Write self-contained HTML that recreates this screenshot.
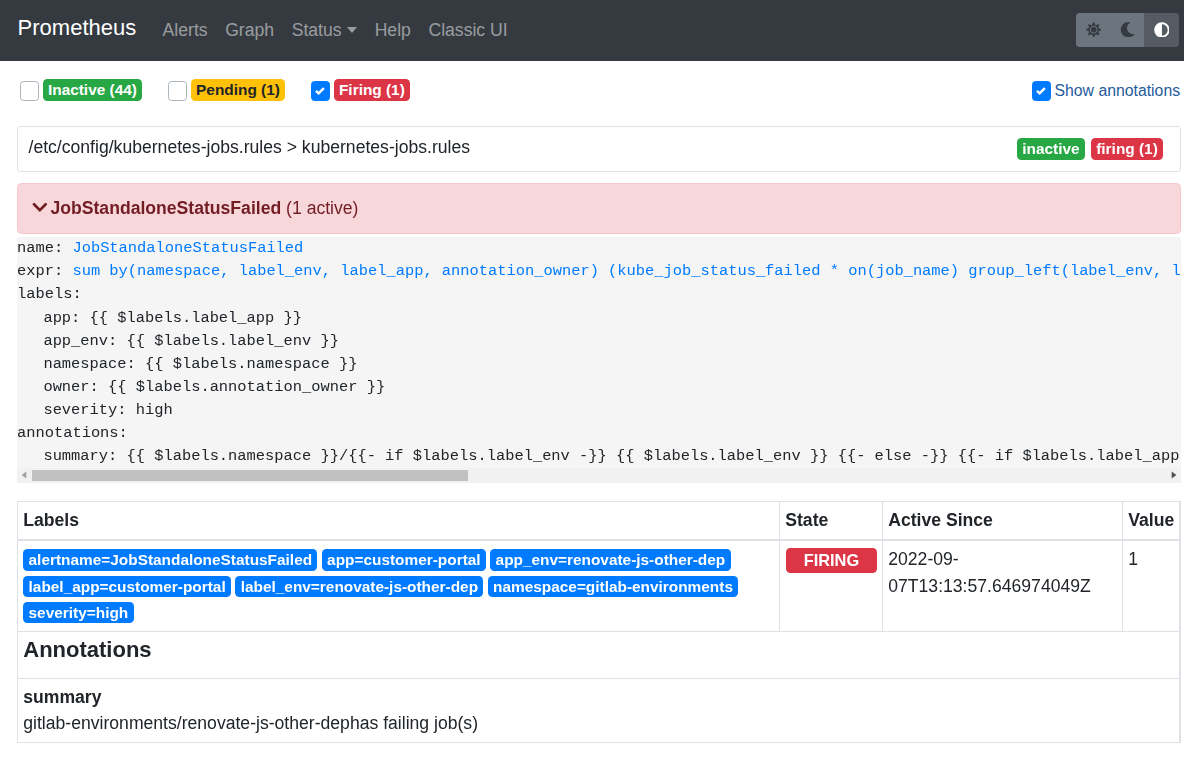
<!DOCTYPE html>
<html>
<head>
<meta charset="utf-8">
<style>
*{box-sizing:border-box;margin:0;padding:0}
html,body{width:1184px;height:761px;overflow:hidden;background:#fff}
body{font-family:"Liberation Sans",sans-serif;color:#212529;position:relative;font-size:17.6px;line-height:26.4px}
.abs{position:absolute}
/* navbar */
.nav{position:absolute;left:0;top:0;width:1184px;height:60.5px;background:#343a40}
.brand{position:absolute;left:17.6px;top:11px;font-size:22px;line-height:33px;color:#fff;white-space:nowrap}
.links{position:absolute;left:153.8px;top:14px;display:flex;white-space:nowrap}
.links span{display:block;padding:0 8.8px;font-size:17.6px;line-height:33px;color:rgba(255,255,255,.5)}
.caret{display:inline-block;margin-left:5.5px;vertical-align:3px;border-top:6.2px solid rgba(255,255,255,.5);border-left:5.2px solid transparent;border-right:5.2px solid transparent}
.tg{position:absolute;left:1076px;top:13px;height:34px;width:102.8px;border-radius:3.5px;overflow:hidden;display:flex}
.tg div{height:34px;background:#6c757d}
/* checkbox row */
.cb{position:absolute;top:81.2px;width:19.2px;height:19.4px;border:1px solid #adb5bd;border-radius:3.6px;background:#fff}
.cb.on{background:#007bff;border-color:#007bff}
.bdg{position:absolute;font-weight:bold;font-size:15.4px;line-height:15.4px;color:#fff;border-radius:4.4px;white-space:nowrap;text-align:center}
/* status card */
.card{position:absolute;left:17px;top:125.8px;width:1164px;height:45.8px;border:1px solid #dee2e6;border-radius:3px}
.alert{position:absolute;left:17px;top:183px;width:1164px;height:50.6px;background:#f8d7da;border:1px solid #f5c6cb;border-radius:4.4px;color:#721c24}
pre{position:absolute;left:17px;top:237px;width:1164px;height:246px;background:#f5f5f5;overflow:hidden;font-family:"Liberation Mono",monospace;font-size:15.4px;line-height:23.1px;color:#212529;white-space:pre}
pre a{color:#007bff;text-decoration:none}
pre .ind{margin-left:26.4px}
pre .l1{position:relative;top:0.5px}
.sb{position:absolute;left:0;bottom:0;width:1164px;height:15px;background:#f1f1f1}
.thumb{position:absolute;left:15px;top:2px;height:11px;width:436px;background:#c1c1c1}
/* table */
table{position:absolute;left:17px;top:501px;width:1163px;border-collapse:collapse;table-layout:fixed}
td,th{border:1.1px solid #dee2e6;padding:5.28px;vertical-align:top;text-align:left}
th{font-weight:bold;border-bottom-width:2.2px}
.lb{display:inline-block;background:#007bff;color:#fff;font-weight:bold;font-size:15.4px;line-height:15.4px;padding:3px 5.3px;border-radius:4.4px;margin-right:4.4px}
</style>
</head>
<body>
<div class="nav">
  <div class="brand">Prometheus</div>
  <div class="links"><span>Alerts</span><span>Graph</span><span>Status<i class="caret"></i></span><span>Help</span><span>Classic UI</span></div>
  <div class="tg">
    <div style="width:34px;position:relative">
      <svg style="position:absolute;left:9.6px;top:8.8px" width="15.4" height="15.4" viewBox="0 0 512 512"><path fill="#343a40" d="M256 160c-52.9 0-96 43.1-96 96s43.1 96 96 96 96-43.1 96-96-43.1-96-96-96zm246.4 80.5l-94.7-47.3 33.5-100.4c4.5-13.6-8.4-26.5-21.9-21.900l-100.4 33.5-47.4-94.8c-6.4-12.8-24.6-12.8-31 0l-47.3 94.7L92.7 70.8c-13.6-4.5-26.5 8.4-21.9 21.9l33.5 100.4-94.700 47.4c-12.8 6.4-12.8 24.6 0 31l94.7 47.3-33.5 100.5c-4.5 13.6 8.4 26.5 21.9 21.9l100.4-33.5 47.3 94.7c6.4 12.8 24.6 12.8 31 0l47.3-94.7 100.4 33.5c13.6 4.5 26.5-8.4 21.9-21.9l-33.5-100.4 94.7-47.3c13-6.5 13-24.7.2-31.1zm-155.9 106c-49.9 49.9-131.1 49.9-181 0-49.9-49.9-49.9-131.1 0-181 49.9-49.9 131.1-49.9 181 0 49.9 49.9 49.9 131.1 0 181z"/></svg>
    </div>
    <div style="width:34px;position:relative">
      <svg style="position:absolute;left:10px;top:8.8px" width="15.4" height="15.4" viewBox="0 0 512 512"><path fill="#343a40" d="M283.211 512c78.962 0 151.079-35.925 198.857-94.792 7.068-8.708-.639-21.43-11.562-19.35-124.203 23.654-238.262-71.576-238.262-196.954 0-72.222 38.662-138.635 101.498-174.394 9.686-5.512 7.25-20.197-3.756-22.23A258.156 258.156 0 0 0 283.211 0c-141.309 0-256 114.511-256 256 0 141.309 114.511 256 256 256z"/></svg>
    </div>
    <div style="width:34.8px;background:#545b62;position:relative">
      <svg style="position:absolute;left:9.5px;top:8.6px" width="15.9" height="15.9" viewBox="0 0 512 512"><path fill="#fff" d="M8 256c0 136.966 111.033 248 248 248s248-111.034 248-248S392.966 8 256 8 8 119.033 8 256zm248 184V72c101.705 0 184 82.311 184 184 0 101.705-82.311 184-184 184z"/></svg>
    </div>
  </div>
</div>

<div class="cb" style="left:20px"></div>
<div class="bdg" style="left:43.1px;top:78.9px;width:98.7px;height:22.1px;padding-top:3.35px;background:#28a745">Inactive (44)</div>
<div class="cb" style="left:168.3px"></div>
<div class="bdg" style="left:191px;top:78.9px;width:94px;height:22.1px;padding-top:3.35px;background:#ffc107;color:#212529">Pending (1)</div>
<div class="cb on" style="left:311px"><svg width="18" height="18" viewBox="0 0 18 18" style="position:absolute;left:0;top:0"><path d="M4 8.9 L6.6 11.4 L11.9 6.1" fill="none" stroke="#fff" stroke-width="2.4" stroke-linecap="butt" stroke-linejoin="miter"/></svg></div>
<div class="bdg" style="left:334.1px;top:78.9px;width:75.6px;height:22.1px;padding-top:3.35px;background:#dc3545">Firing (1)</div>
<div class="cb on" style="left:1032px"><svg width="18" height="18" viewBox="0 0 18 18" style="position:absolute;left:0;top:0"><path d="M4 8.9 L6.6 11.4 L11.9 6.1" fill="none" stroke="#fff" stroke-width="2.4" stroke-linecap="butt" stroke-linejoin="miter"/></svg></div>
<div class="abs" style="left:1054.5px;top:77.6px;font-size:15.8px;color:#1f5c9c;white-space:nowrap">Show annotations</div>

<div class="gl" style="position:absolute;left:0;top:0;width:1184px;height:761px;will-change:transform">
<div class="card">
  <div class="abs" style="left:10.5px;top:7.5px;white-space:nowrap">/etc/config/kubernetes-jobs.rules &gt; kubernetes-jobs.rules</div>
  <div class="bdg" style="left:999px;top:11.4px;width:68px;height:21.6px;padding-top:3.1px;background:#28a745">inactive</div>
  <div class="bdg" style="left:1073px;top:11.4px;width:72px;height:21.6px;padding-top:3.1px;background:#dc3545">firing (1)</div>
</div>

<div class="alert">
  <svg class="abs" style="left:10px;top:12px" width="28" height="22" viewBox="0 0 28 22"><path d="M6 8.2 L11.85 14.1 L17.7 8.2" fill="none" stroke="#721c24" stroke-width="2.7" stroke-linecap="round" stroke-linejoin="miter"/></svg>
  <div class="abs" style="left:32.5px;top:11px;white-space:nowrap"><b>JobStandaloneStatusFailed</b> (1 active)</div>
</div>

<pre><div>name: <a>JobStandaloneStatusFailed</a></div><div>expr: <a>sum by(namespace, label_env, label_app, annotation_owner) (kube_job_status_failed * on(job_name) group_left(label_env, label_app, annotation_owner) kube_job_labels{label_app!=""}) &gt; 0</a></div><div>labels:</div><div class="ind l1">app: {{ $labels.label_app }}</div><div class="ind l1">app_env: {{ $labels.label_env }}</div><div class="ind l1">namespace: {{ $labels.namespace }}</div><div class="ind l1">owner: {{ $labels.annotation_owner }}</div><div class="ind l1">severity: high</div><div>annotations:</div><div class="ind">summary: {{ $labels.namespace }}/{{- if $labels.label_env -}} {{ $labels.label_env }} {{- else -}} {{- if $labels.label_app -}} {{ $labels.label_app }} {{- end -}} {{- end -}} has failing job(s)</div><div class="sb"><div class="thumb"></div><svg style="position:absolute;left:4px;top:3px" width="6" height="8" viewBox="0 0 6 8"><path d="M5.3 0.5 L0.6 4 L5.3 7.5Z" fill="#a3a3a3"/></svg><svg style="position:absolute;left:1154px;top:3px" width="6" height="8" viewBox="0 0 6 8"><path d="M0.7 0.5 L5.4 4 L0.7 7.5Z" fill="#505050"/></svg></div></pre>

<table>
<colgroup><col style="width:762px"><col style="width:103px"><col style="width:240px"><col></colgroup>
<tr><th>Labels</th><th>State</th><th>Active Since</th><th>Value</th></tr>
<tr><td><span class="lb">alertname=JobStandaloneStatusFailed</span><span class="lb">app=customer-portal</span><span class="lb">app_env=renovate-js-other-dep</span><span class="lb">label_app=customer-portal</span><span class="lb">label_env=renovate-js-other-dep</span><span class="lb">namespace=gitlab-environments</span><span class="lb">severity=high</span></td>
<td><span class="lb" style="background:#dc3545;font-size:16.4px;line-height:16.4px;padding:4px 18px 4.4px;margin:1.7px 0 0 0.4px">FIRING</span></td><td>2022-09-<br>07T13:13:57.646974049Z</td><td>1</td></tr>
<tr><td colspan="4"><div style="font-size:22px;line-height:26.4px;margin-bottom:9.6px;font-weight:bold">Annotations</div></td></tr>
<tr><td colspan="4" style="padding:5px 5.28px 4.8px"><div style="font-weight:bold">summary</div><div style="position:relative;top:-0.8px">gitlab-environments/renovate-js-other-dephas failing job(s)</div></td></tr>
</table>
<div style="position:absolute;left:1180px;top:501px;width:1px;height:242px;background:#dee2e6"></div>
</div>
</body>
</html>
